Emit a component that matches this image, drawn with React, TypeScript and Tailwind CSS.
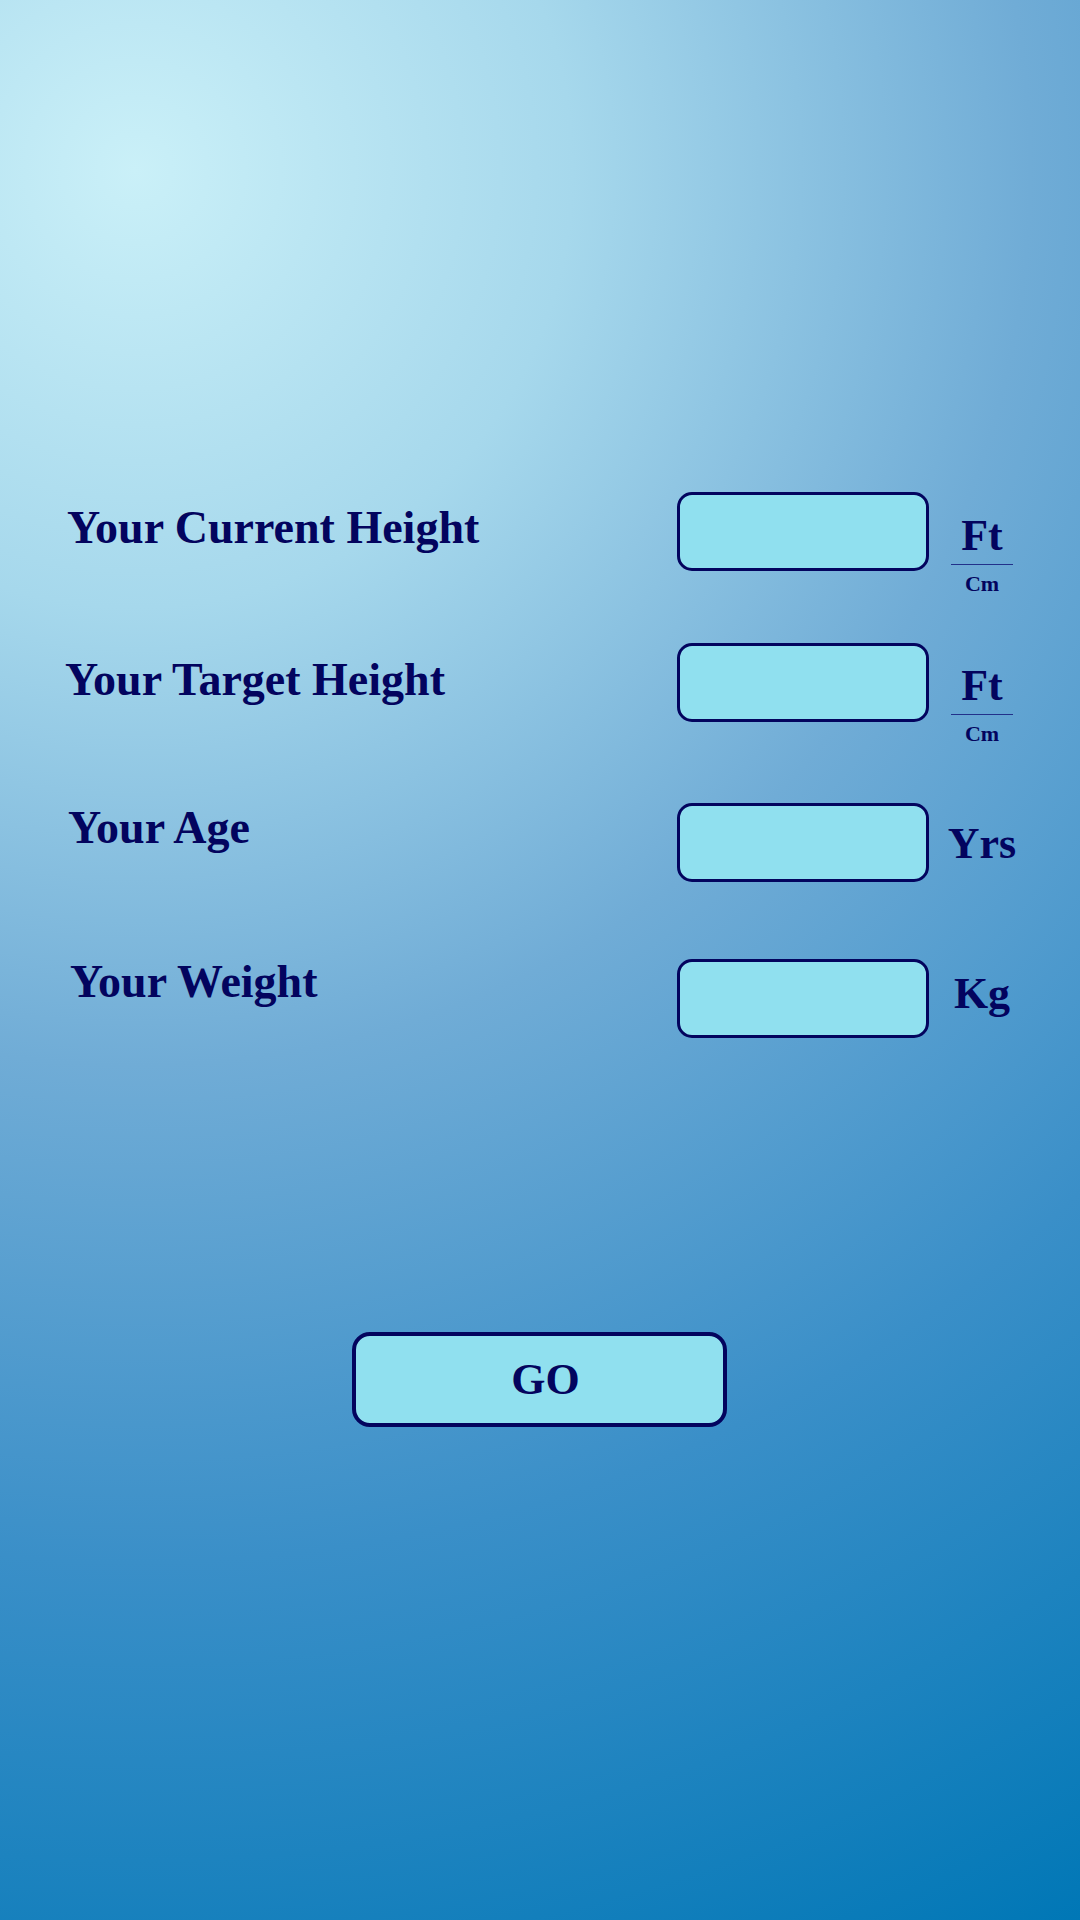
import React from "react";

type Row = {
  label: string;
  unit: string;
  sub?: string;
  rowClass: string;
  labelClass: string;
  unitClass: string;
};

const rows: Row[] = [
  { label: "Your Current Height", unit: "Ft", sub: "Cm", rowClass: "mt-0", labelClass: "mt-[13px] ml-[1px]", unitClass: "mt-[22px]" },
  { label: "Your Target Height", unit: "Ft", sub: "Cm", rowClass: "mt-[72px]", labelClass: "mt-[14px] -ml-[1px]", unitClass: "mt-[21px]" },
  { label: "Your Age", unit: "Yrs", rowClass: "mt-[81px]", labelClass: "mt-[2px] ml-[2px]", unitClass: "mt-[19px]" },
  { label: "Your Weight", unit: "Kg", rowClass: "mt-[77px]", labelClass: "mt-0 ml-[4px]", unitClass: "mt-[13px]" },
];

function UnitStack({ row }: { row: Row }) {
  if (!row.sub) {
    return (
      <div className={`w-[76px] text-center text-[44px] leading-[44px] ${row.unitClass}`}>
        {row.unit}
      </div>
    );
  }
  return (
    <div className={`w-[76px] flex flex-col items-center ${row.unitClass}`}>
      <span className="text-[44px] leading-[44px]">{row.unit}</span>
      <div className="mt-[6px] h-px w-[62px] bg-[#22318a]" />
      <span className="mt-[8px] text-[22px] leading-[22px]">{row.sub}</span>
    </div>
  );
}

export default function App() {
  return (
    <div
      className="min-h-[1920px] w-full pt-[492px] font-bold text-[#03045e] bg-[radial-gradient(circle_at_135px_170px,#caf0f8_0%,#a6d8ec_22%,#70acd6_45%,#3a8fc8_70%,#0077b6_100%)]"
      style={{ fontFamily: '"Liberation Serif", "Times New Roman", serif' }}
    >
      <div className="flex flex-col pl-[66px]">
        {rows.map((row) => (
          <div key={row.label} className={`flex items-start h-[79px] ${row.rowClass}`}>
            <div className={`flex-1 text-[46px] leading-[46px] whitespace-nowrap ${row.labelClass}`}>
              {row.label}
            </div>
            <input
              type="text"
              aria-label={row.label}
              className="w-[252px] h-[79px] rounded-[15px] border-[3px] border-[#03045e] bg-[#90e0ef] outline-none"
            />
            <div className="ml-[15px] mr-[60px] w-[76px]">
              <UnitStack row={row} />
            </div>
          </div>
        ))}
      </div>

      <div className="flex justify-center mt-[294px]">
        <button className="ml-[-1px] w-[375px] h-[95px] rounded-[18px] border-4 border-[#03045e] bg-[#90e0ef] pl-3 text-[44px] leading-[44px] font-bold text-[#03045e]">
          GO
        </button>
      </div>
    </div>
  );
}
